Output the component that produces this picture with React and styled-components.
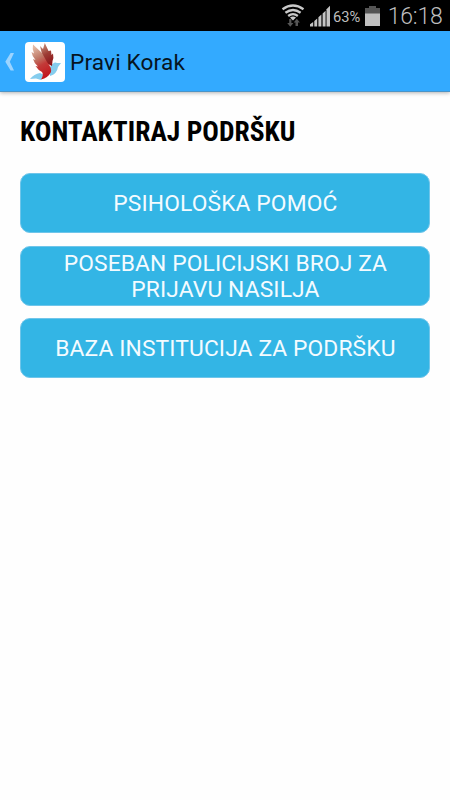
import React from 'react';
import styled, { createGlobalStyle } from 'styled-components';

const GlobalStyle = createGlobalStyle`
  * { box-sizing: border-box; }
  body { margin: 0; background: #fefefe; }
`;

const Screen = styled.div`
  width: 450px;
  height: 800px;
  display: flex;
  flex-direction: column;
  background: #fefefe;
  font-family: Roboto, sans-serif;
  overflow: hidden;
`;

const StatusBar = styled.div`
  height: 31px;
  flex: none;
  background: #000;
  color: #bdbdbd;
  display: flex;
  align-items: flex-start;
  justify-content: flex-end;
  padding-right: 8px;
`;

const StatusIcons = styled.svg`
  display: block;
  width: 51px;
  height: 31px;
  margin-right: 2px;
`;

const Percent = styled.span`
  font-size: 15px;
  line-height: 18px;
  margin-top: 8px;
  width: 27px;
  white-space: nowrap;
  transform: scaleX(0.98);
  transform-origin: left;
`;

const BatteryIcon = styled.svg`
  display: block;
  width: 15px;
  height: 31px;
  margin: 0 7px 0 5px;
`;

const Clock = styled.span`
  font-size: 23px;
  line-height: 28px;
  margin-top: 3px;
  width: 55px;
  white-space: nowrap;
  text-indent: 0.7px;
  letter-spacing: -0.2px;
  font-weight: 350;
`;

const ActionBar = styled.header`
  height: 61px;
  flex: none;
  display: flex;
  align-items: center;
  background: #33aaff;
  border-bottom: 1px solid #4a94c8;
  box-shadow: 0 1px 4px rgba(0, 0, 0, 0.3);
`;

const BackIcon = styled.svg`
  width: 25px;
  height: 60px;
  flex: none;
`;

const AppIcon = styled.svg`
  width: 40px;
  height: 40px;
  flex: none;
  margin-top: 1px;
  border-radius: 4px;
  background: #fff;
`;

const Title = styled.h1`
  margin: 3px 0 0 5px;
  font-size: 22.6px;
  line-height: 28px;
  font-weight: 400;
  letter-spacing: 0.15px;
  color: #06141f;
  white-space: nowrap;
`;

const Content = styled.main`
  padding: 25px 20px 0;
`;

const Heading = styled.h2`
  margin: 0 0 25.4px;
  font-family: 'Roboto Condensed', Roboto, sans-serif;
  font-size: 27px;
  font-stretch: 75%;
  line-height: 31px;
  font-weight: 700;
  transform: scaleX(1.019);
  transform-origin: left;
  color: #000;
  white-space: nowrap;
`;

const ButtonList = styled.div`
  display: flex;
  flex-direction: column;
  gap: 12.5px;
`;

const SupportButton = styled.button`
  height: 60px;
  width: 100%;
  padding: 2.6px 0 0 0.8px;
  border: 1px solid #6fc5ea;
  border-radius: 10px;
  background: #33b5e5;
  color: #f4fbff;
  font-family: Roboto, sans-serif;
  font-weight: 380;
  font-size: 22.8px;
  line-height: 26.4px;
  letter-spacing: 0.12px;
  text-align: center;
  white-space: pre-line;
`;

const actions = [
  'PSIHOLOŠKA POMOĆ',
  'POSEBAN POLICIJSKI BROJ ZA\nPRIJAVU NASILJA',
  'BAZA INSTITUCIJA ZA PODRŠKU',
];

function Signals() {
  return (
    <StatusIcons viewBox="280 0 51 31">
      <g fill="none" stroke="#c9c9c9" strokeWidth="2.3">
        <path d="M282.5 9.2Q293 1.8 303.5 9.2" />
        <path d="M285.4 12.7Q293 7.2 300.6 12.7" />
        <path d="M288.2 16Q293 12.3 297.8 16" />
      </g>
      <path d="M290 17.6Q293 15.4 296 17.6L293 20.5Z" fill="#c9c9c9" />
      <path d="M289.2 19h2.2v4h2l-3.1 3.7-3.1-3.7h2zM295.5 26v-3.5h-1.8l3.1-3.7 3.1 3.7h-1.9V26z" fill="#565656" />
      <path d="M310 26.5v-2.2l3.2-2.4v4.6zM314.3 26.5v-5.6l2.9-2.5v8.1zM318.4 26.5v-9.2l3-2.7v11.9zM322.6 26.5v-13l3-2.8v15.8z" fill="#c4c4c4" />
      <path d="M326.5 26.5V9.2L330 5.8v20.7z" fill="#c4c4c4" />
    </StatusIcons>
  );
}

function Battery() {
  return (
    <BatteryIcon viewBox="0 0 15 31">
      <path d="M4 6h7v2h4v6H0V8h4z" fill="#555" />
      <path d="M0 13.5h15V26H0z" fill="#c0c0c0" />
    </BatteryIcon>
  );
}

function BirdIcon() {
  return (
    <AppIcon viewBox="0 0 40 40">
      <defs>
        <linearGradient id="wing" gradientUnits="userSpaceOnUse" x1="8" y1="6" x2="23" y2="34">
          <stop offset="0" stopColor="#e2b9a4" />
          <stop offset="0.35" stopColor="#c07a68" />
          <stop offset="0.6" stopColor="#c23a38" />
          <stop offset="1" stopColor="#c3161e" />
        </linearGradient>
        <linearGradient id="rear" gradientUnits="userSpaceOnUse" x1="17" y1="4" x2="27" y2="22">
          <stop offset="0" stopColor="#c08370" />
          <stop offset="0.45" stopColor="#9d3c34" />
          <stop offset="1" stopColor="#8c1118" />
        </linearGradient>
      </defs>
      <path d="M25 25Q29 19 32 21L36 21L33 25Q32 32 25 34Z" fill="#85cdee" />
      <path d="M5 37Q9 32 15 31L19 33L16 38L11 36.5Z" fill="#85cdee" />
      <path d="M15 4L18 7L19.8 1L23.5 9L26 8.5L26.5 13L28 11.5Q29 16 27.5 19L27 24L19 20Z" fill="url(#rear)" />
      <path d="M8 2.5L17 11L22 20Q27 26 26 30Q23 36 16 37.5Q19 33 17 30Q13 28 10.5 24L13 24.5Q9 21 8 17L10.5 18Q7 14 6.5 10L9 11.5Q7 7 8 2.5Z" fill="url(#wing)" />
    </AppIcon>
  );
}

export default function App() {
  return (
    <Screen>
      <GlobalStyle />
      <StatusBar>
        <Signals />
        <Percent>63%</Percent>
        <Battery />
        <Clock>16:18</Clock>
      </StatusBar>
      <ActionBar>
        <BackIcon viewBox="0 0 25 60">
          <path d="M10.6 22h3.4l-4.2 8.8 4.2 8.7h-3.4L5.3 30.8z" fill="#9cd4ff" />
        </BackIcon>
        <BirdIcon />
        <Title>Pravi Korak</Title>
      </ActionBar>
      <Content>
        <Heading>KONTAKTIRAJ PODRŠKU</Heading>
        <ButtonList>
          {actions.map((text) => (
            <SupportButton key={text} type="button">
              {text}
            </SupportButton>
          ))}
        </ButtonList>
      </Content>
    </Screen>
  );
}
